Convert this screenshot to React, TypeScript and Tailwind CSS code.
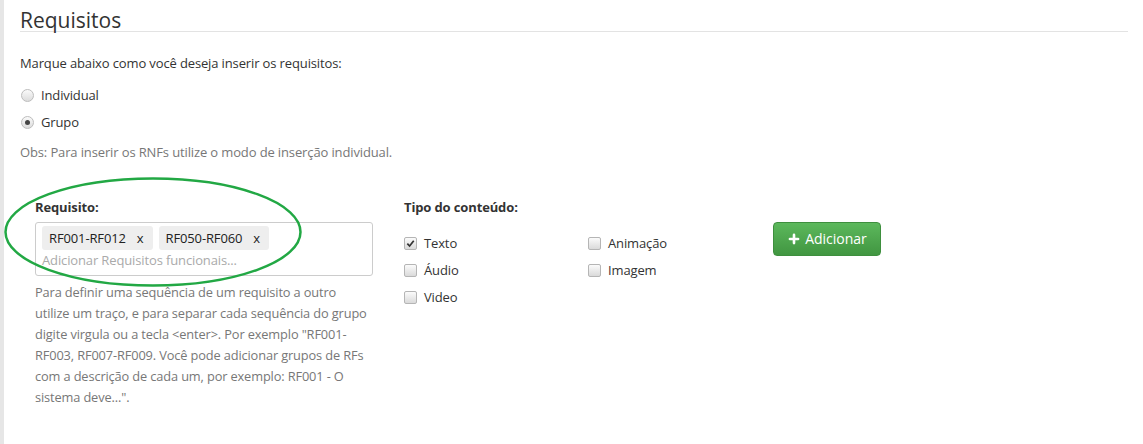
import { Plus } from "lucide-react";

const font = { fontFamily: '"Open Sans", "Liberation Sans", sans-serif' };

function Radio({ checked }: { checked?: boolean }) {
  return (
    <span className="flex h-[13px] w-[13px] items-center justify-center rounded-full border border-[#bdbdbd] bg-gradient-to-b from-[#fafafa] to-[#dcdcdc]">
      {checked && <span className="h-[5px] w-[5px] rounded-full bg-[#444]" />}
    </span>
  );
}

function Check({ checked }: { checked?: boolean }) {
  return (
    <span className="flex h-[13px] w-[13px] items-center justify-center rounded-[2px] border border-[#b5b5b5] bg-gradient-to-b from-[#fbfbfb] to-[#dadada]">
      {checked && (
        <svg viewBox="0 0 10 10" className="h-[9px] w-[9px]">
          <path d="M1.5 5.2 L4 7.8 L8.6 2" fill="none" stroke="#333" strokeWidth="1.9" />
        </svg>
      )}
    </span>
  );
}

const tags = ["RF001-RF012", "RF050-RF060"];

const options = [
  { label: "Texto", checked: true },
  { label: "Animação" },
  { label: "Áudio" },
  { label: "Imagem" },
  { label: "Video" },
];

export default function App() {
  return (
    <div className="flex h-[444px] w-[1143px] bg-white text-[13px] leading-[20px] tracking-[-0.13px] text-[#333]" style={font}>
      <div className="w-[4px] shrink-0 bg-[#e6e6e6]" />
      <div className="relative flex-1 pl-[16px] pr-[15px]">
        <h1 className="border-b border-[#e3e3e3] pt-[9px] text-[21px] font-normal leading-[22px] tracking-normal text-[#333]">
          Requisitos
        </h1>

        <p className="mt-[21px]">Marque abaixo como você deseja inserir os requisitos:</p>

        <div className="mt-[12px] flex items-center gap-[7px]">
          <span className="ml-[1px]"><Radio /></span>
          <span>Individual</span>
        </div>
        <div className="mt-[7px] flex items-center gap-[7px]">
          <span className="ml-[1px]"><Radio checked /></span>
          <span>Grupo</span>
        </div>

        <p className="mt-[10px] text-[#777]">Obs: Para inserir os RNFs utilize o modo de inserção individual.</p>

        <div className="mt-[35px] flex pl-[15px]">
          <div className="w-[369px]">
            <div className="font-bold">Requisito:</div>
            <div className="mt-[5px] w-[338px] rounded-[3px] border border-[#ccc] px-[6px] pt-[3px] pb-[5px]">
              <div className="flex gap-[6px]">
                {tags.map((t) => (
                  <span key={t} className="flex h-[24px] items-center gap-[11px] rounded-[3px] bg-[#eee] pl-[7px] pr-[9px] text-[#222]">
                    {t}
                    <span>x</span>
                  </span>
                ))}
              </div>
              <div className="text-[#aaa]">Adicionar Requisitos funcionais...</div>
            </div>
            <p className="mt-[6px] w-[345px] text-[12.8px] leading-[21px] text-[#777]">
              Para definir uma sequência de um requisito a outro<br />
              utilize um traço, e para separar cada sequência do grupo<br />
              digite virgula ou a tecla &lt;enter&gt;. Por exemplo "RF001-<br />
              RF003, RF007-RF009. Você pode adicionar grupos de RFs<br />
              com a descrição de cada um, por exemplo: RF001 - O<br />
              sistema deve...".
            </p>
          </div>

          <div className="w-[369px]">
            <div className="font-bold">Tipo do conteúdo:</div>
            <div className="mt-[16px] grid grid-cols-[184px_184px] gap-y-[7px]">
              {options.map((o) => (
                <label key={o.label} className="flex items-center gap-[7px]">
                  <Check checked={o.checked} />
                  <span>{o.label}</span>
                </label>
              ))}
            </div>
          </div>

          <div className="pt-[25px]">
            <button className="flex h-[34px] w-[108px] items-center justify-center gap-[4px] rounded-[4px] border border-[#3e8f3e] bg-gradient-to-b from-[#5cb85c] to-[#419641] text-[14px] tracking-normal text-white">
              <Plus className="h-[14px] w-[14px]" strokeWidth={4.5} />
              Adicionar
            </button>
          </div>
        </div>

        <svg className="pointer-events-none absolute left-[-1px] top-[176px] h-[112px] w-[300px]" viewBox="0 0 300 112">
          <ellipse cx="150" cy="56" rx="147.5" ry="53.5" fill="none" stroke="#22a844" strokeWidth="2.5" />
        </svg>
      </div>
    </div>
  );
}
